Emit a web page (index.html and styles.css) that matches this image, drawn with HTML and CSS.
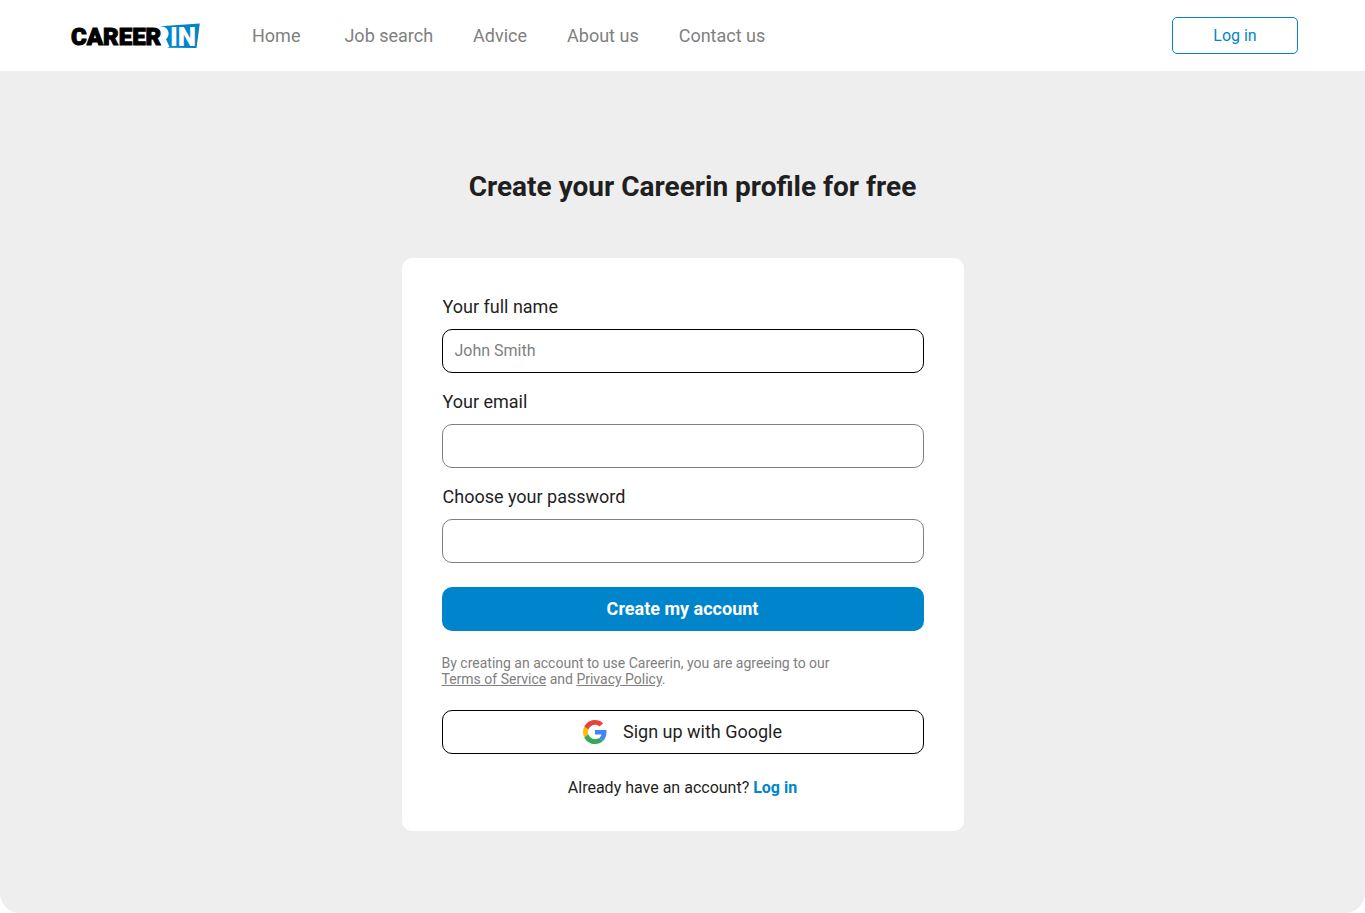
FILE: index.html
```html
<!DOCTYPE html>
<html lang="en">
<head>
<meta charset="utf-8">
<meta name="viewport" content="width=device-width, initial-scale=1">
<title>Careerin – Create your profile</title>
<link rel="stylesheet" href="styles.css">
</head>
<body>
<header class="site-header">
  <a class="logo" href="#" aria-label="Careerin">
    <svg width="130" height="27" viewBox="0 0 130 27">
      <path class="logo-tag" d="M88.500 4.200 L128.800 1.500 L125.500 26 L96 25.700 L98.500 24.800 L95 17.300 C98.200 14.500 98.500 9.500 95.500 6.500 C93.800 5 91.500 4.300 88.500 4.200Z"/>
      <text class="logo-career" x="0" y="23">CAREER</text>
      <text class="logo-in" x="99" y="24">IN</text>
    </svg>
  </a>
  <nav class="nav">
    <a class="nav-home" href="#">Home</a>
    <a href="#">Job search</a>
    <a href="#">Advice</a>
    <a href="#">About us</a>
    <a href="#">Contact us</a>
  </nav>
  <button class="login-button" type="button">Log in</button>
</header>
<main class="page">
  <h1 class="title">Create your Careerin profile for free</h1>
  <form class="card">
    <div class="field">
      <label for="name">Your full name</label>
      <input class="input-active" id="name" type="text" placeholder="John Smith">
    </div>
    <div class="field">
      <label for="email">Your email</label>
      <input id="email" type="email">
    </div>
    <div class="field">
      <label for="password">Choose your password</label>
      <input id="password" type="password">
    </div>
    <button class="submit" type="submit">Create my account</button>
    <p class="terms">By creating an account to use Careerin, you are agreeing to our <a href="#">Terms of Service</a> and <a href="#">Privacy Policy</a>.</p>
    <button class="google" type="button">
      <svg width="24" height="24" viewBox="0 0 48 48" aria-hidden="true">
        <path fill="#EA4335" d="M24 9.500c3.540 0 6.710 1.220 9.210 3.600l6.850-6.850C35.900 2.380 30.470 0 24 0 14.620 0 6.510 5.380 2.560 13.220l7.980 6.190C12.430 13.720 17.740 9.500 24 9.500z"/>
        <path fill="#4285F4" d="M46.980 24.550c0-1.570-.15-3.090-.38-4.550H24v9.020h12.940c-.58 2.960-2.260 5.480-4.780 7.180l7.730 6c4.510-4.180 7.090-10.360 7.090-17.650z"/>
        <path fill="#FBBC05" d="M10.530 28.590c-.48-1.450-.76-2.990-.76-4.590s.27-3.140.76-4.590l-7.980-6.190C.92 16.460 0 20.120 0 24s.92 7.540 2.560 10.780l7.970-6.190z"/>
        <path fill="#34A853" d="M24 48c6.480 0 11.930-2.130 15.890-5.810l-7.730-6c-2.150 1.450-4.920 2.300-8.160 2.300-6.260 0-11.570-4.220-13.470-9.910l-7.980 6.190C6.510 42.620 14.620 48 24 48z"/>
      </svg>
      <span>Sign up with Google</span>
    </button>
    <p class="signin">Already have an account? <a href="#">Log in</a></p>
  </form>
</main>
</body>
</html>
```
FILE: styles.css
```css
* { box-sizing: border-box; }
body {
  margin: 0;
  min-height: 100vh;
  display: flex;
  flex-direction: column;
  background: #fff;
  color: #1f1f1f;
  font-family: Roboto, "Liberation Sans", sans-serif;
  font-size: 16px;
}
a { color: inherit; text-decoration: none; }
button, input { font: inherit; }
button { cursor: pointer; }

.site-header {
  display: flex;
  align-items: center;
  height: 71px;
  padding: 0 67px 0 71px;
}
.logo { display: flex; }
.logo svg { display: block; overflow: visible; }
.logo-tag { fill: #0085cd; }
.logo-career,
.logo-in { font-family: Roboto, sans-serif; font-weight: 900; }
.logo-career { fill: #000; stroke: #000; stroke-width: 1px; font-size: 24px; }
.logo-in { fill: #fff; font-size: 26px; }
.nav {
  display: flex;
  gap: 40px;
  margin-left: 51px;
  color: #808080;
  font-size: 18px;
  line-height: 24px;
}
.nav-home { margin-right: 4px; }
.login-button {
  width: 126px;
  height: 37px;
  margin-left: auto;
  border: 1px solid #0085cd;
  border-radius: 5px;
  background: #fff;
  color: #0085cd;
}

.page {
  flex: 1;
  display: flex;
  flex-direction: column;
  align-items: center;
  padding: 98px 20px 82px;
  border-radius: 0 0 20px 20px;
  background: #eee;
}
.title {
  margin: 0;
  padding-left: 20px;
  font-size: 28px;
  font-weight: 700;
  line-height: 36px;
}
.card {
  display: flex;
  flex-direction: column;
  width: 100%;
  max-width: 562px;
  margin-top: 53px;
  padding: 37px 40px 31px;
  border-radius: 10px;
  background: #fff;
}
.field {
  display: flex;
  flex-direction: column;
  gap: 10px;
  margin-bottom: 17px;
}
.field label {
  padding-left: 1px;
  font-size: 18px;
  line-height: 24px;
}
.field input {
  width: 100%;
  height: 44px;
  padding: 0 12px 2px;
  border: 1px solid #808080;
  border-radius: 10px;
  background: #fff;
  color: #1f1f1f;
}
.field .input-active { border-color: #000; }
.field input::placeholder { color: #808080; opacity: 1; }
.submit {
  height: 44px;
  margin-top: 7px;
  border: 0;
  border-radius: 10px;
  background: #0085cd;
  color: #fff;
  font-size: 18px;
  font-weight: 700;
  line-height: 20px;
}
.terms {
  max-width: 400px;
  margin: 24px 0 23px;
  color: #808080;
  font-size: 14px;
  line-height: 16px;
}
.terms a { text-decoration: underline; }
.google {
  display: flex;
  align-items: center;
  justify-content: center;
  gap: 16px;
  height: 44px;
  border: 1px solid #000;
  border-radius: 10px;
  background: #fff;
  color: #1f1f1f;
  font-size: 18px;
  line-height: 20px;
}
.signin {
  margin: 22px 0 0;
  line-height: 24px;
  text-align: center;
}
.signin a { color: #0085cd; font-weight: 700; }
```
